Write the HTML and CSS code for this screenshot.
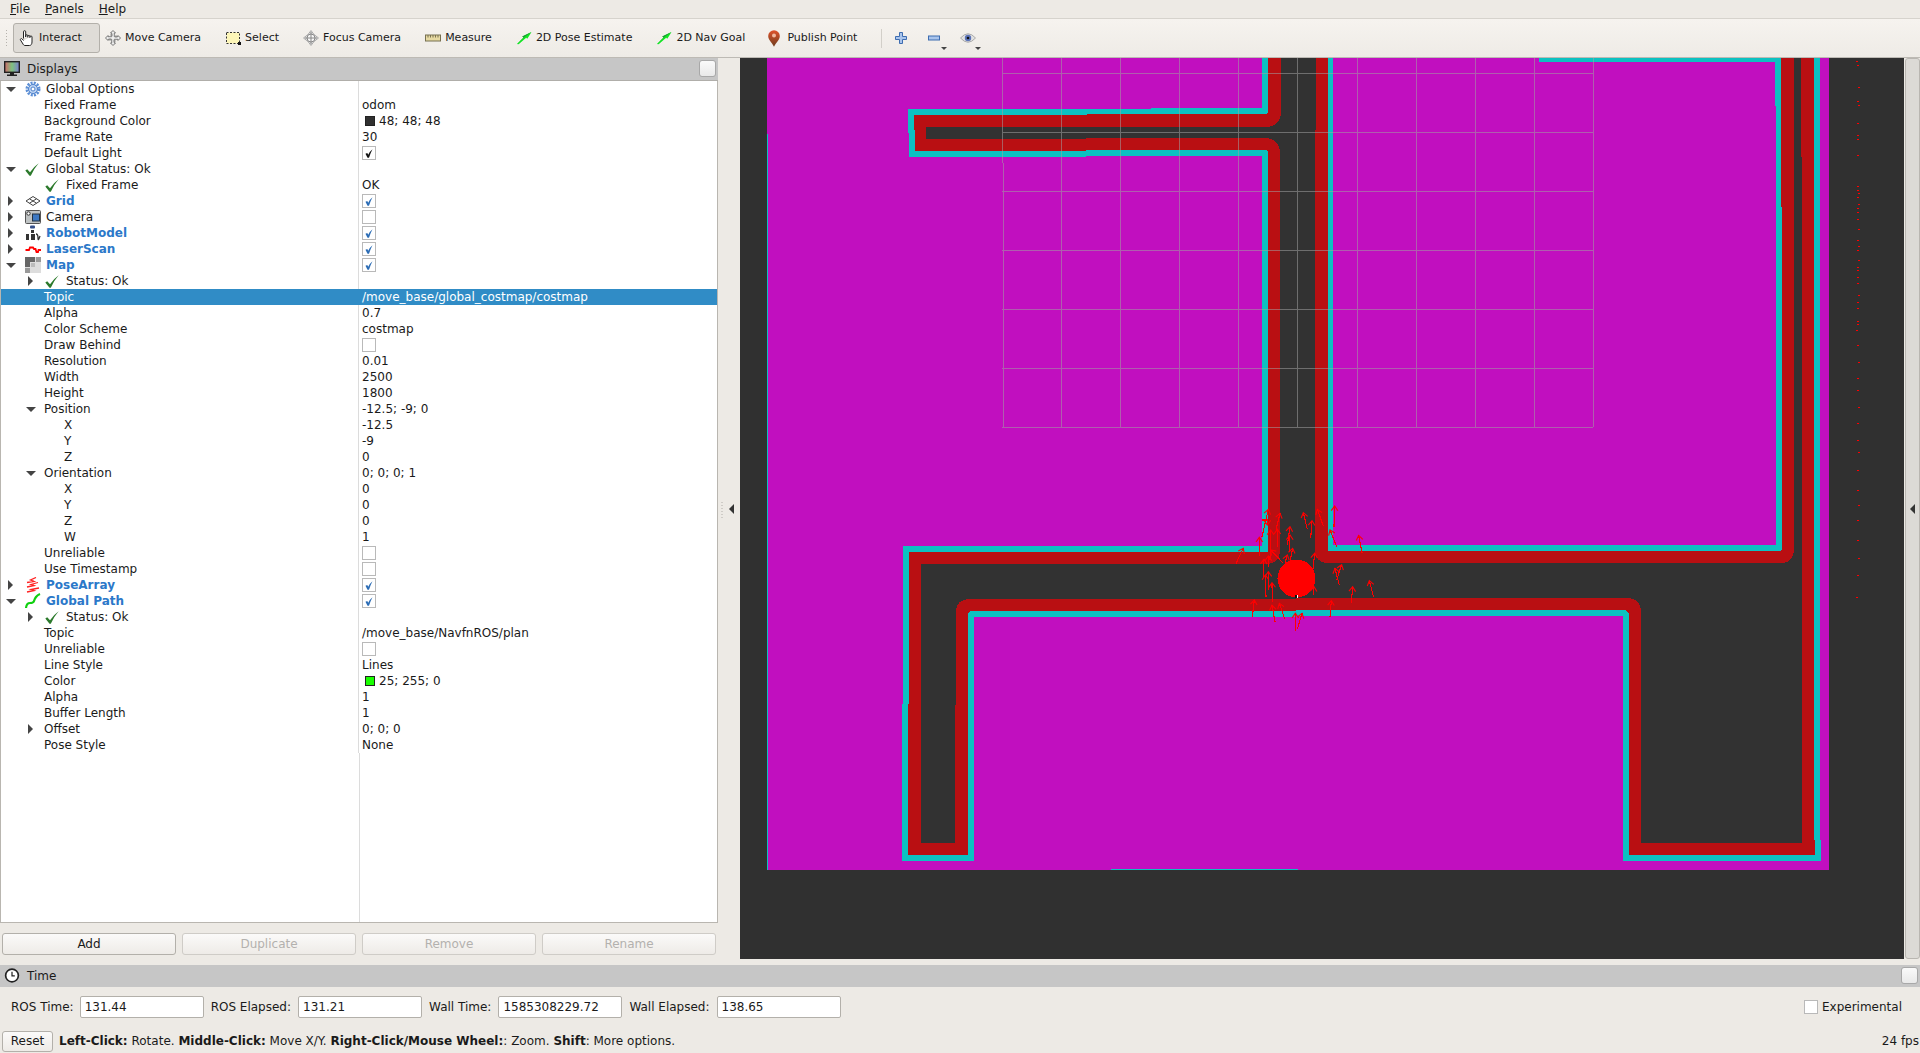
FILE: index.html
```html
<!DOCTYPE html>
<html lang="en">
<head>
    <meta charset="UTF-8">
    <title>RViz</title>
    <link rel="stylesheet" href="styles.css">
</head>
<body>
    <svg class="defs" width="0" height="0">
        <defs>
            <symbol id="i-check" viewBox="0 0 14 13">
                <path d="M.3 7.500 2.200 6.300 5 9.300Q8.500 4 13.700.3 9 5.500 5.800 12.800H4.500Z" fill="#2c7a2c"/>
            </symbol>
            <symbol id="i-tick" viewBox="0 0 8 9">
                <path d="M.5 4.800 2.300 4 3.200 5.800Q4.800 2.500 7.500.3 5.500 4 4 8.700H2.500Z" fill="currentColor"/>
            </symbol>
            <symbol id="i-goal" viewBox="0 0 17 14">
                <path d="M1 13.500 8 6.500 6.600 5.400 16.500.5 12 7.800 10.800 6.700 2.500 14Z" fill="#11e822"/>
                <path d="M1 13.500 8 6.500 6.600 5.400 16.500.5 9.500 5.700Z" fill="#1d9c36"/>
            </symbol>
            <linearGradient id="pin-grad" x1="0" y1="0" x2="0" y2="1">
                <stop offset="0" stop-color="#e0522a"/>
                <stop offset="1" stop-color="#6d3d1e"/>
            </linearGradient>
            <marker id="head" markerUnits="userSpaceOnUse" markerWidth="40" markerHeight="40" refX="20" refY="20" orient="auto" viewBox="0 0 40 40">
                <path d="M6 10 20 20 6 30" fill="none" stroke="#f00" stroke-width="3.400"/>
            </marker>
        </defs>
    </svg>

    <div class="menubar">
        <span class="menu-item"><u>F</u>ile</span>
        <span class="menu-item"><u>P</u>anels</span>
        <span class="menu-item"><u>H</u>elp</span>
    </div>

    <div class="toolbar">
        <span class="grip"></span>
        <div class="tool active">
            <svg class="tool-icon" viewBox="0 0 16 16"><path d="M4.500 8.500V1.800a1 1 0 0 1 2.200 0V7M6.700 7V5.800a1 1 0 0 1 2.100 0V7.500M8.800 6.500a1 1 0 0 1 2.100 0V8M10.900 7a1 1 0 0 1 2.100 0v5c0 2-1 3.500-2.500 3.500H6c-1 0-1.500-.6-2-1.500L1.500 10c-.6-1 .8-2 1.700-1l1.300 1.500" fill="#fff" stroke="#222"/></svg>
            <span>Interact</span>
        </div>
        <div class="tool">
            <svg class="tool-icon" viewBox="0 0 16 16"><path d="M8 .5 10.500 3H9.300V6.700H13V5.500L15.500 8 13 10.500V9.300H9.300V13H10.500L8 15.500 5.500 13H6.700V9.300H3V10.500L.5 8 3 5.500V6.700H6.700V3H5.500Z" fill="#eee" stroke="#777"/><path d="M5 5h6v6H5z" fill="none" stroke="#999" stroke-dasharray="1 1"/></svg>
            <span>Move Camera</span>
        </div>
        <div class="tool">
            <svg class="tool-icon" viewBox="0 0 16 16"><rect x="1.500" y="2.500" width="13" height="11" fill="#fdf6b8" stroke="#333" stroke-dasharray="2 1.500"/><rect x="13" y="12" width="3" height="3" fill="#111"/></svg>
            <span>Select</span>
        </div>
        <div class="tool">
            <svg class="tool-icon" viewBox="0 0 16 16"><path d="M8 .5 11 4.500 15.500 8 11 11.500 8 15.500 5 11.500.5 8 5 4.500Z" fill="#e4e4e4" stroke="#aaa"/><circle cx="8" cy="8" r="4" fill="#f6f6f6" stroke="#888"/><path d="M8 2v12M2 8h12" stroke="#888"/></svg>
            <span>Focus Camera</span>
        </div>
        <div class="tool">
            <svg class="tool-icon" viewBox="0 0 16 16"><rect x=".5" y="5" width="15" height="6" fill="#e6d9a2" stroke="#777050"/><path d="M3 5v2.500M5.500 5v2.500M8 5v2.500M10.500 5v2.500M13 5v2.500" stroke="#777050"/></svg>
            <span>Measure</span>
        </div>
        <div class="tool">
            <svg class="tool-icon" viewBox="0 0 17 14"><use href="#i-goal"/></svg>
            <span>2D Pose Estimate</span>
        </div>
        <div class="tool">
            <svg class="tool-icon" viewBox="0 0 17 14"><use href="#i-goal"/></svg>
            <span>2D Nav Goal</span>
        </div>
        <div class="tool tool-pin">
            <svg class="pin-icon" viewBox="0 0 12 17"><path d="M6 .2a5.800 5.800 0 0 1 5.800 5.800C11.800 10 8 12.500 6 16.800 4 12.500.2 10 .2 6A5.800 5.800 0 0 1 6 .2Z" fill="url(#pin-grad)"/><circle cx="6" cy="5.500" r="2" fill="#f2b9a0"/></svg>
            <span>Publish Point</span>
        </div>
        <span class="tool-sep"></span>
        <svg class="view-icon" viewBox="0 0 12 12"><path d="M4.500.5h3v4h4v3h-4v4h-3v-4h-4v-3h4Z" fill="#a9c4ec" stroke="#3d6cb0"/></svg>
        <span class="view-drop">
            <svg class="view-icon" viewBox="0 0 12 12"><rect x=".5" y="4" width="11" height="4" fill="#a9c4ec" stroke="#3d6cb0"/></svg>
            <span class="caret"></span>
        </span>
        <span class="view-drop">
            <svg class="eye-icon" viewBox="0 0 16 11"><path d="M.5 5.500Q8-3 15.500 5.500 8 14 .5 5.500Z" fill="#e2e2e2" stroke="#aaa"/><circle cx="8" cy="5.500" r="3.200" fill="#5c74b8"/><circle cx="8" cy="5.500" r="1.300" fill="#111"/></svg>
            <span class="caret"></span>
        </span>
    </div>

    <div class="main">
        <div class="side">
            <div class="dock-title">
                <svg class="dock-icon" viewBox="0 0 16 15"><rect x=".7" y=".7" width="14.600" height="10.600" fill="url(#mon)" stroke="#222" stroke-width="1.400"/><defs><linearGradient id="mon"><stop offset="0" stop-color="#cf6a6a"/><stop offset=".5" stop-color="#7fc27f"/><stop offset="1" stop-color="#7a7fd0"/></linearGradient></defs><path d="M6 12h4v1.500h3V15H3v-1.500h3Z" fill="#222"/></svg>
                <span>Displays</span>
                <span class="dock-close"></span>
            </div>
            <div class="tree">
                <div class="row"><div class="name top"><span class="tw open"></span><svg class="ticon" viewBox="0 0 16 16"><circle cx="8" cy="8" r="6" fill="none" stroke="#5c8fd6" stroke-width="3" stroke-dasharray="2 1.140"/><circle cx="8" cy="8" r="4.500" fill="#bcd3f2" stroke="#4f82cc"/><circle cx="8" cy="8" r="2" fill="#fff" stroke="#4f82cc"/></svg>Global Options</div><div class="value"></div></div>
                <div class="row"><div class="name sub">Fixed Frame</div><div class="value">odom</div></div>
                <div class="row"><div class="name sub">Background Color</div><div class="value"><span class="swatch dark"></span>48; 48; 48</div></div>
                <div class="row"><div class="name sub">Frame Rate</div><div class="value">30</div></div>
                <div class="row"><div class="name sub">Default Light</div><div class="value"><span class="cb black"><svg><use href="#i-tick"/></svg></span></div></div>
                <div class="row"><div class="name top"><span class="tw open"></span><svg class="ticon check" viewBox="0 0 14 13"><use href="#i-check"/></svg>Global Status: Ok</div><div class="value"></div></div>
                <div class="row"><div class="name sub"><svg class="ticon check" viewBox="0 0 14 13"><use href="#i-check"/></svg>Fixed Frame</div><div class="value">OK</div></div>
                <div class="row"><div class="name top"><span class="tw closed"></span><svg class="ticon" viewBox="0 0 16 16"><path d="M8 3.500 15 8 8 12.500 1 8ZM4.500 5.800 11.500 10.200M11.500 5.800 4.500 10.200" fill="none" stroke="#444"/></svg><b>Grid</b></div><div class="value"><span class="cb"><svg><use href="#i-tick"/></svg></span></div></div>
                <div class="row"><div class="name top"><span class="tw closed"></span><svg class="ticon" viewBox="0 0 16 16"><rect x=".5" y="1.500" width="15" height="13" rx="1" fill="#bfc3c4" stroke="#555"/><rect x="7.500" y="5" width="7" height="7" fill="#3d79c4" stroke="#234"/><circle cx="3.500" cy="4.500" r="1.700" fill="#fff" stroke="#333"/></svg>Camera</div><div class="value"><span class="cb"></span></div></div>
                <div class="row"><div class="name top"><span class="tw closed"></span><svg class="ticon" viewBox="0 0 16 16"><rect x="5" y=".5" width="5" height="3" rx="1" fill="#35508a"/><path d="M6 5h3v3H6zM1 9h3v6H1zM6 9h4v6H6z" fill="#333"/><path d="M11 9q2 0 2 4t2-2" fill="none" stroke="#333" stroke-width="1.300"/></svg><b>RobotModel</b></div><div class="value"><span class="cb"><svg><use href="#i-tick"/></svg></span></div></div>
                <div class="row"><div class="name top"><span class="tw closed"></span><svg class="ticon" viewBox="0 0 16 16"><path d="M.5 9H4L5 6.500H8L9 8H10.500L11.500 11H13L13.500 9H16" fill="none" stroke="#f00" stroke-width="1.800"/></svg><b>LaserScan</b></div><div class="value"><span class="cb"><svg><use href="#i-tick"/></svg></span></div></div>
                <div class="row"><div class="name top"><span class="tw open"></span><svg class="ticon" viewBox="0 0 16 16"><rect width="16" height="16" fill="#ddd"/><path d="M0 0h10v5H5v5H0z" fill="#666"/><path d="M11 0h5v5h-5zM0 11h5v5H0z" fill="#999"/><path d="M6 6h4v4H6z" fill="#bbb"/></svg><b>Map</b></div><div class="value"><span class="cb"><svg><use href="#i-tick"/></svg></span></div></div>
                <div class="row"><div class="name mid"><span class="tw closed"></span><svg class="ticon check" viewBox="0 0 14 13"><use href="#i-check"/></svg>Status: Ok</div><div class="value"></div></div>
                <div class="row selected"><div class="name sub">Topic</div><div class="value">/move_base/global_costmap/costmap</div></div>
                <div class="row"><div class="name sub">Alpha</div><div class="value">0.7</div></div>
                <div class="row"><div class="name sub">Color Scheme</div><div class="value">costmap</div></div>
                <div class="row"><div class="name sub">Draw Behind</div><div class="value"><span class="cb"></span></div></div>
                <div class="row"><div class="name sub">Resolution</div><div class="value">0.01</div></div>
                <div class="row"><div class="name sub">Width</div><div class="value">2500</div></div>
                <div class="row"><div class="name sub">Height</div><div class="value">1800</div></div>
                <div class="row"><div class="name mid"><span class="tw open"></span>Position</div><div class="value">-12.5; -9; 0</div></div>
                <div class="row"><div class="name leaf">X</div><div class="value">-12.5</div></div>
                <div class="row"><div class="name leaf">Y</div><div class="value">-9</div></div>
                <div class="row"><div class="name leaf">Z</div><div class="value">0</div></div>
                <div class="row"><div class="name mid"><span class="tw open"></span>Orientation</div><div class="value">0; 0; 0; 1</div></div>
                <div class="row"><div class="name leaf">X</div><div class="value">0</div></div>
                <div class="row"><div class="name leaf">Y</div><div class="value">0</div></div>
                <div class="row"><div class="name leaf">Z</div><div class="value">0</div></div>
                <div class="row"><div class="name leaf">W</div><div class="value">1</div></div>
                <div class="row"><div class="name sub">Unreliable</div><div class="value"><span class="cb"></span></div></div>
                <div class="row"><div class="name sub">Use Timestamp</div><div class="value"><span class="cb"></span></div></div>
                <div class="row"><div class="name top"><span class="tw closed"></span><svg class="ticon" viewBox="0 0 16 16"><path d="M2 5.500 9 4.500 5.500 3 11 .5M2 10 9 8.500 6 7.500 13 5.500M2 15 9 13.500 6 12.500 14 11" fill="none" stroke="#f22" stroke-width="1.300"/></svg><b>PoseArray</b></div><div class="value"><span class="cb"><svg><use href="#i-tick"/></svg></span></div></div>
                <div class="row"><div class="name top"><span class="tw open"></span><svg class="ticon" viewBox="0 0 16 16"><path d="M1 15Q1.500 10 5 10T9 8 11 4 15 1" fill="none" stroke="#10d010" stroke-width="2.200"/></svg><b>Global Path</b></div><div class="value"><span class="cb"><svg><use href="#i-tick"/></svg></span></div></div>
                <div class="row"><div class="name mid"><span class="tw closed"></span><svg class="ticon check" viewBox="0 0 14 13"><use href="#i-check"/></svg>Status: Ok</div><div class="value"></div></div>
                <div class="row"><div class="name sub">Topic</div><div class="value">/move_base/NavfnROS/plan</div></div>
                <div class="row"><div class="name sub">Unreliable</div><div class="value"><span class="cb"></span></div></div>
                <div class="row"><div class="name sub">Line Style</div><div class="value">Lines</div></div>
                <div class="row"><div class="name sub">Color</div><div class="value"><span class="swatch green"></span>25; 255; 0</div></div>
                <div class="row"><div class="name sub">Alpha</div><div class="value">1</div></div>
                <div class="row"><div class="name sub">Buffer Length</div><div class="value">1</div></div>
                <div class="row"><div class="name mid"><span class="tw closed"></span>Offset</div><div class="value">0; 0; 0</div></div>
                <div class="row"><div class="name sub">Pose Style</div><div class="value">None</div></div>
                <div class="tree-fill"></div>
            </div>
            <div class="side-buttons">
                <button class="btn">Add</button>
                <button class="btn" disabled>Duplicate</button>
                <button class="btn" disabled>Remove</button>
                <button class="btn" disabled>Rename</button>
            </div>
        </div>

        <div class="splitter">
            <span class="split-dots"></span>
            <span class="split-arrow"></span>
        </div>

        <svg class="view" viewBox="740 58 1164 901" width="1164" height="901" shape-rendering="crispEdges">
            <rect x="740" y="58" width="1164" height="901" fill="#303030"/>
            <rect x="767" y="58" width="1062" height="812" fill="#c10fbf"/>
            <path d="M767 134h1v736h-1zM1111 869h187v1h-187z" fill="#0cc1c1"/>
            <path fill="#0cc1c1" d="M1262 58V108H1151V109H908V133H909V157H1086V156H1262V546H903V704H902V861H974V617H1296V616H1623V861H1821V840H1820V58H1539V62H1775V106H1776V545H1333V58Z"/>
            <path fill="#b90f12" d="M1268 58V112L1266 114H1087V115H914V130H915V151H1086V150H1266L1268 152V552H909V704H908V855H968V613L970 611H1296V610H1625L1629 614V855H1815V840H1814V58H1781V207H1782V549L1780 551H1328V58Z"/>
            <path fill="#323232" d="M1281 58V111Q1281 127 1265 127H926V139H1086V138H1264Q1280 138 1280 154V550Q1280 564 1266 564H921V843H955V705H956V613Q956 599 970 599H1296V598H1627Q1641 598 1641 612V843H1802V157H1801V58H1794V549Q1794 563 1780 563H1329Q1315 563 1315 549V130H1316V58Z"/>

            <path class="grid-lines" d="M1002 58V163M1003 163V427M1061 58V427M1120 58V427M1179 58V427M1238 58V427M1297 58V427M1357 58V427M1416 58V427M1475 58V427M1534 58V427M1593 58V427M1002 73H1593M1002 132H1593M1002 191H1593M1002 250H1593M1002 309H1593M1002 368H1593M1002 427H1593"/>

            <path class="scan-dots" d="M1856 61h2M1857 65h2M1858 87h2M1857 101h2M1858 105h2M1857 123h2M1857 135h2M1857 139h2M1857 155h2M1857 186h2M1857 190h2M1858 193h2M1857 197h2M1858 204h2M1857 208h2M1857 212h2M1857 219h2M1858 229h2M1857 240h2M1858 246h2M1857 250h2M1858 260h2M1857 267h2M1857 270h2M1857 277h2M1857 283h2M1858 295h2M1857 302h2M1857 308h2M1857 321h2M1857 324h2M1856 330h2M1857 345h2M1858 362h2M1857 378h2M1857 390h2M1858 407h2M1857 423h2M1857 440h2M1858 452h2M1857 470h2M1857 490h2M1858 505h2M1857 520h2M1857 540h2M1858 558h2M1857 575h2M1856 597h2"/>

            <circle cx="1296.500" cy="578.500" r="19" fill="#f00"/>
            <rect x="1295" y="595" width="2" height="3" fill="#111"/>
            <rect x="1297" y="595" width="1" height="3" fill="#fff"/>

            <g class="poses" transform="translate(1200 480) scale(.33333)">
                <path d="M108 250 130 205"/><path d="M178 228V172"/><path d="M186 170 205 88"/>
                <path d="M228 150 240 100"/><path d="M322 148 310 98"/><path d="M332 175 336 122"/>
                <path d="M370 138 352 88"/><path d="M402 140 404 78"/><path d="M410 200 390 150"/>
                <path d="M486 218 476 166"/><path d="M232 200V148"/><path d="M262 195 270 140"/>
                <path d="M268 215 270 165"/><path d="M210 240 212 150"/><path d="M250 250 212 210"/>
                <path d="M190 290 192 238"/><path d="M205 260V228"/><path d="M270 245 278 205"/>
                <path d="M255 250 262 225"/><path d="M338 275 344 220"/><path d="M418 316 405 265"/>
                <path d="M410 300 425 254"/><path d="M454 368 458 320"/><path d="M521 352 508 302"/>
                <path d="M198 350 196 285"/><path d="M205 330V275"/><path d="M217 365 216 308"/>
                <path d="M157 410 163 360"/><path d="M225 425 216 376"/><path d="M254 416 238 370"/>
                <path d="M390 412 394 362"/><path d="M286 452V400"/><path d="M292 448 306 400"/>
                <path d="M340 345 342 320"/><path d="M186 120H202V135"/>
            </g>
        </svg>

        <div class="side-handle"><span class="handle-arrow"></span></div>
    </div>

    <div class="dock-title time-title">
        <svg class="dock-icon" viewBox="0 0 16 16"><circle cx="8" cy="8" r="6.800" fill="#fff" stroke="#222" stroke-width="1.800"/><path d="M8 4V8.500H11" fill="none" stroke="#222" stroke-width="1.300"/></svg>
        <span>Time</span>
        <span class="dock-close"></span>
    </div>

    <div class="time-row">
        <label class="first">ROS Time:</label><input class="time-box" value="131.44">
        <label>ROS Elapsed:</label><input class="time-box" value="131.21">
        <label>Wall Time:</label><input class="time-box" value="1585308229.72">
        <label>Wall Elapsed:</label><input class="time-box" value="138.65">
        <span class="experimental"><span class="cb"></span>Experimental</span>
    </div>

    <div class="status-row">
        <button class="btn reset">Reset</button>
        <span class="hint"><b>Left-Click:</b> Rotate. <b>Middle-Click:</b> Move X/Y. <b>Right-Click/Mouse Wheel:</b>: Zoom. <b>Shift</b>: More options.</span>
        <span class="fps">24 fps</span>
    </div>
</body>
</html>
```

FILE: styles.css
```css
*,
*::after,
*::before{
    box-sizing: border-box;
}
html, body{
    margin: 0;
    padding: 0;
}
body{
    width: 1920px;
    height: 1053px;
    overflow: hidden;
    display: flex;
    flex-direction: column;
    background-color: #edeae5;
    color: #1a1a1a;
    font: normal 12px/16px "DejaVu Sans", sans-serif;
}
.defs{
    position: absolute;
}
b{
    font-weight: bold;
}

/* menu + toolbar */
.menubar{
    height: 19px;
    display: flex;
    align-items: center;
    gap: 15px;
    padding-left: 10px;
    padding-bottom: 1px;
    border-bottom: 1px solid #d6d3cd;
}
.toolbar{
    height: 39px;
    display: flex;
    align-items: center;
    padding: 0 0 0 5px;
    font-size: 11px;
    background: linear-gradient(#f6f3ef, #eeebe6);
    border-bottom: 1px solid #bdbab4;
}
.grip{
    width: 4px;
    height: 18px;
    margin-right: 4px;
    background-image: radial-gradient(#b5b2ac 1px, transparent 1px);
    background-size: 3px 3px;
}
.tool{
    height: 30px;
    display: flex;
    align-items: center;
    gap: 4px;
    padding: 0 18px 0 5px;
    border: 1px solid transparent;
    margin-right: -1px;
}
.tool.active{
    background-color: #dfdcd7;
    border: 1px solid #b3b0aa;
    border-radius: 3px;
    margin-right: -1px;
    padding-right: 17px;
}
.tool-icon{
    width: 16px;
    height: 16px;
}
.pin-icon{
    width: 12px;
    height: 17px;
    margin-right: 3px;
}
.tool-pin{
    padding-left: 4px;
    padding-right: 0;
    margin-right: 23px;
}
.tool-sep{
    width: 1px;
    height: 19px;
    background-color: #d2cfc9;
    margin-right: 13px;
}
.view-icon{
    width: 12px;
    height: 12px;
}
.view-drop{
    position: relative;
    display: flex;
    margin-left: 21px;
}
.view-drop + .view-drop{
    margin-left: 20px;
}
.eye-icon{
    width: 16px;
    height: 12px;
}
.caret{
    position: absolute;
    right: -7px;
    bottom: -6px;
    border-left: 3px solid transparent;
    border-right: 3px solid transparent;
    border-top: 3px solid #444;
}
.view-drop + .view-drop .caret{
    right: -5px;
}

/* main area */
.main{
    height: 907px;
    display: flex;
    align-items: flex-start;
}
.side{
    width: 718px;
    height: 907px;
    display: flex;
    flex-direction: column;
}
.dock-title{
    height: 23px;
    flex: none;
    display: flex;
    align-items: center;
    gap: 7px;
    padding: 0 2px 1px 4px;
    background-color: #c6c6c6;
    border-bottom: 1px solid #b0aeaa;
}
.dock-icon{
    width: 16px;
    height: 15px;
}
.dock-close{
    width: 17px;
    height: 17px;
    margin-left: auto;
    background: linear-gradient(#fafafa, #e9e9e9);
    border: 1px solid #a8a8a8;
    border-radius: 3px;
}
.time-title{
    height: 22px;
    border-bottom: none;
}

/* properties tree */
.tree{
    height: 842px;
    flex: none;
    display: flex;
    flex-direction: column;
    background-color: #fff;
    border-left: 1px solid #b9b6b0;
    border-right: 1px solid #b9b6b0;
    border-bottom: 1px solid #b9b6b0;
}
.row{
    height: 16px;
    flex: none;
    display: flex;
}
.name{
    width: 358px;
    flex: none;
    display: flex;
    align-items: center;
    white-space: nowrap;
    border-right: 1px solid #dcdcdc;
}
.value{
    flex: 1;
    display: flex;
    align-items: center;
    padding-left: 3px;
    white-space: nowrap;
}
.name.top{
    padding-left: 4px;
}
.name.mid{
    padding-left: 24px;
}
.name.sub{
    padding-left: 43px;
}
.name.leaf{
    padding-left: 63px;
}
.name b{
    color: #2b78c9;
}
.selected{
    background-color: #308cc6;
    color: #fff;
}
.selected .name{
    border-right-color: #308cc6;
}
.tree-fill{
    flex: 1;
    width: 359px;
    border-right: 1px solid #dcdcdc;
}
.tw{
    width: 11px;
    height: 16px;
    flex: none;
    margin-right: 9px;
    display: flex;
    align-items: center;
    justify-content: center;
}
.mid .tw{
    margin-right: 8px;
}
.tw.open::before{
    content: "";
    border-left: 5px solid transparent;
    border-right: 5px solid transparent;
    border-top: 5px solid #444;
}
.tw.closed::before{
    content: "";
    border-top: 5px solid transparent;
    border-bottom: 5px solid transparent;
    border-left: 5px solid #444;
}
.ticon{
    width: 16px;
    height: 16px;
    flex: none;
    margin-right: 5px;
}
.ticon.check{
    width: 14px;
    height: 13px;
    margin-right: 7px;
}
.sub .ticon.check, .mid .ticon.check{
    margin-left: 1px;
    margin-right: 7px;
}
.cb{
    width: 14px;
    height: 14px;
    flex: none;
    display: flex;
    align-items: center;
    justify-content: center;
    background-color: #fff;
    border: 1px solid #b9b9b9;
    color: #2b6cb5;
}
.cb.black{
    color: #111;
}
.cb svg{
    width: 8px;
    height: 9px;
}
.swatch{
    width: 10px;
    height: 10px;
    margin: 0 4px 0 3px;
    border: 1px solid #222;
}
.swatch.dark{
    background-color: #303030;
}
.swatch.green{
    background-color: #19ff00;
}

/* buttons */
.side-buttons{
    display: flex;
    gap: 6px;
    padding: 10px 0 0 2px;
}
.btn{
    width: 174px;
    height: 22px;
    padding: 0;
    font: inherit;
    color: #1a1a1a;
    background: linear-gradient(#fbfaf9, #eeebe7);
    border: 1px solid #b3b0aa;
    border-radius: 3px;
}
.btn[disabled]{
    color: #b3b1ae;
    border-color: #cfccc7;
}

/* splitter and handles */
.splitter{
    width: 22px;
    height: 901px;
    position: relative;
}
.split-dots{
    position: absolute;
    left: 3px;
    top: 444px;
    width: 2px;
    height: 18px;
    background-image: repeating-linear-gradient(#cfccc7 0, #cfccc7 1px, transparent 1px, transparent 3px);
}
.split-arrow{
    position: absolute;
    left: 11px;
    top: 446px;
    border-top: 5px solid transparent;
    border-bottom: 5px solid transparent;
    border-right: 5px solid #333;
}
.view{
    display: block;
    flex: none;
}
.grid-lines{
    fill: none;
    stroke: #a0a0a0;
    stroke-opacity: .55;
    stroke-width: 1;
}
.scan-dots{
    fill: none;
    stroke: #f00;
    stroke-width: 1;
}
.poses path{
    fill: none;
    stroke: #f00;
    stroke-width: 3.400;
    marker-end: url(#head);
}
.side-handle{
    width: 15px;
    height: 901px;
    margin-left: 1px;
    display: flex;
    align-items: center;
    justify-content: center;
    background-color: #dcdad6;
    border: 1px solid #b9b6b1;
    border-radius: 3px;
}
.handle-arrow{
    border-top: 5px solid transparent;
    border-bottom: 5px solid transparent;
    border-right: 5px solid #333;
}

/* time + status */
.time-row{
    height: 43px;
    flex: none;
    display: flex;
    align-items: center;
    padding: 0 2px 4px 11px;
}
.time-row label{
    margin-right: 7px;
}
.time-row label.first{
    margin-right: 6px;
}
.time-box{
    width: 124px;
    height: 22px;
    margin-right: 7px;
    padding: 0 4px;
    font: inherit;
    color: #1a1a1a;
    background-color: #fff;
    border: 1px solid #b3b0aa;
    border-radius: 2px;
}
.experimental{
    margin-left: auto;
    display: flex;
    align-items: center;
    gap: 4px;
    margin-right: 16px;
}
.status-row{
    flex: 1;
    display: flex;
    align-items: center;
    padding-left: 2px;
    padding-bottom: 1px;
}
.btn.reset{
    width: 51px;
    height: 21px;
}
.hint{
    margin-left: 6px;
}
.fps{
    margin-left: auto;
    margin-right: 1px;
}
```
